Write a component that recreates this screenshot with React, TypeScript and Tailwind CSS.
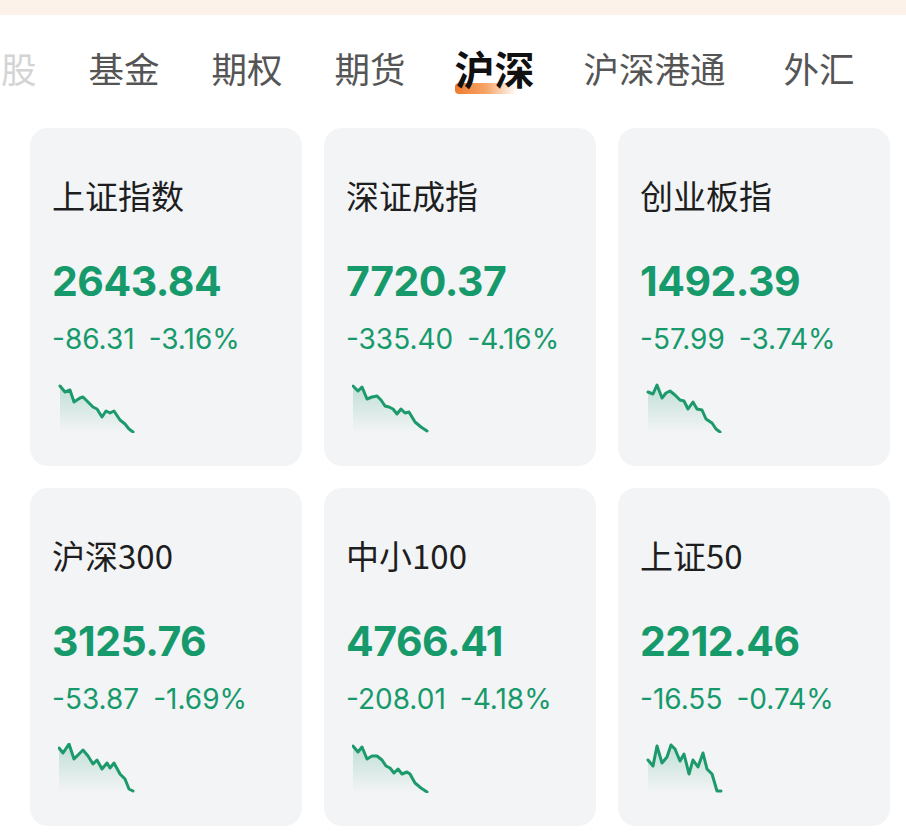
import React from 'react'

const TABS = ['股', '基金', '期权', '期货', '沪深', '沪深港通', '外汇']

type Index = {
  name: string
  price: string
  change: string
  pct: string
  line: number[][]
}

const INDEXES: Index[] = [
  {
    name: '上证指数',
    price: '2643.84',
    change: '-86.31',
    pct: '-3.16%',
    line: [[2, 2], [7, 8], [12, 6], [16, 18], [22, 14], [25, 13], [30, 18], [35, 23], [39, 25], [44, 33], [48, 27], [52, 29], [56, 27], [62, 36], [67, 40], [71, 45], [75, 48]],
  },
  {
    name: '深证成指',
    price: '7720.37',
    change: '-335.40',
    pct: '-4.16%',
    line: [[1, 2], [6, 7], [10, 3], [15, 15], [20, 13], [25, 12], [29, 16], [33, 22], [37, 23], [41, 25], [45, 30], [49, 25], [53, 29], [57, 28], [63, 38], [69, 43], [75, 47]],
  },
  {
    name: '创业板指',
    price: '1492.39',
    change: '-57.99',
    pct: '-3.74%',
    line: [[2, 8], [7, 10], [11, 1], [16, 14], [20, 9], [24, 7], [29, 11], [34, 16], [38, 17], [42, 25], [47, 18], [51, 25], [56, 26], [60, 35], [66, 39], [70, 45], [74, 48]],
  },
  {
    name: '沪深300',
    price: '3125.76',
    change: '-53.87',
    pct: '-1.69%',
    line: [[1, 4], [5, 9], [11, 0], [16, 15], [21, 10], [25, 6], [30, 12], [35, 20], [39, 16], [44, 25], [49, 19], [52, 24], [56, 19], [62, 30], [67, 35], [71, 45], [75, 47]],
  },
  {
    name: '中小100',
    price: '4766.41',
    change: '-208.01',
    pct: '-4.18%',
    line: [[1, 2], [6, 8], [10, 3], [15, 15], [20, 12], [25, 12], [30, 16], [34, 22], [38, 24], [42, 29], [46, 25], [50, 30], [55, 28], [58, 30], [63, 39], [69, 44], [75, 48]],
  },
  {
    name: '上证50',
    price: '2212.46',
    change: '-16.55',
    pct: '-0.74%',
    line: [[2, 16], [7, 22], [11, 2], [16, 19], [21, 13], [25, 1], [29, 5], [34, 17], [38, 10], [43, 30], [47, 16], [52, 23], [57, 9], [61, 25], [66, 30], [71, 47], [75, 47]],
  },
]

function Sparkline({ points, id }: { points: number[][]; id: string }) {
  const line = points.map(([x, y]) => `${x},${y + 1}`).join(' ')
  const first = points[0]
  const last = points[points.length - 1]
  const area = `${line} ${last[0]},50 ${first[0]},50`
  return (
    <svg width="80" height="50" viewBox="0 0 80 50" className="block">
      <defs>
        <linearGradient id={id} x1="0" y1="0" x2="0" y2="1">
          <stop offset="0%" stopColor="#1f9d6f" stopOpacity="0.24" />
          <stop offset="100%" stopColor="#1f9d6f" stopOpacity="0" />
        </linearGradient>
      </defs>
      <polygon points={area} fill={`url(#${id})`} />
      <polyline points={line} fill="none" stroke="#1c9a6c" strokeWidth="3" strokeLinejoin="round" strokeLinecap="round" />
    </svg>
  )
}

function IndexCard({ item, i }: { item: Index; i: number }) {
  return (
    <div className="flex h-[338px] flex-col rounded-[18px] bg-[#f3f4f6] pl-[22px] pt-[47px]">
      <div className="font-['Noto_Sans_CJK_SC',sans-serif] text-[33px] leading-[40px] text-[#1e1e1e]">{item.name}</div>
      <div className="mt-[42px] font-['Inter',sans-serif] text-[41px] font-bold leading-[48px] tracking-[-0.5px] text-[#179a6b]">
        {item.price}
      </div>
      <div className="mt-[17px] flex gap-[14px] font-['Inter',sans-serif] text-[28px] leading-[34px] text-[#179a6b]">
        <span>{item.change}</span>
        <span>{item.pct}</span>
      </div>
      <div className="mt-[27px] pl-[6px]">
        <Sparkline points={item.line} id={`g${i}`} />
      </div>
    </div>
  )
}

export default function App() {
  return (
    <div className="h-[833px] w-[906px] overflow-hidden bg-white">
      <div className="h-[15px] bg-[#fdf2ea]" />

      <div className="flex h-[113px] items-center gap-[52px] pl-[1px] pb-[8px] font-['Noto_Sans_CJK_SC',sans-serif]">
        {TABS.map((t, idx) =>
          t === '沪深' ? (
            <div key={idx} className="relative -mx-[3px]">
              <span className="relative z-10 text-[40px] font-bold leading-[46px] text-[#111]">{t}</span>
              <div className="absolute left-0 top-[38px] h-[11px] w-[62px] rounded-[4px] bg-gradient-to-r from-[#ef7a2c] via-[#f6a468] to-transparent" />
            </div>
          ) : (
            <span
              key={idx}
              className={`shrink-0 text-[35.5px] leading-[46px] ${idx === 0 ? 'text-[#d4d4d4]' : 'text-[#555]'} ${idx === 6 ? 'ml-[6px]' : ''}`}
            >
              {t}
            </span>
          )
        )}
      </div>

      <div className="grid grid-cols-[272px_272px_272px] gap-[22px] pl-[30px]">
        {INDEXES.map((item, i) => (
          <IndexCard key={item.name} item={item} i={i} />
        ))}
      </div>
    </div>
  )
}
